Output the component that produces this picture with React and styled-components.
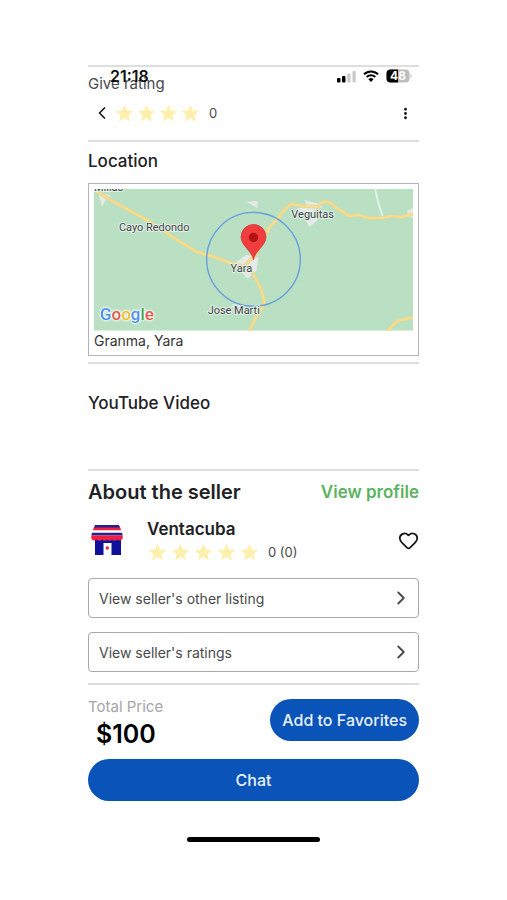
import React, { useState } from "react";
import styled, { createGlobalStyle } from "styled-components";
import { ChevronLeft, ChevronRight, Heart } from "lucide-react";
import { MdStar, MdMoreVert } from "react-icons/md";

const GlobalStyle = createGlobalStyle`
  * {
    box-sizing: border-box;
  }
  body {
    margin: 0;
    background-color: #ffffff;
    color: #202124;
    font-family: Inter, "Liberation Sans", sans-serif;
  }
  h1, h2, h3, p {
    margin: 0;
  }
  button {
    font-family: inherit;
    color: inherit;
    cursor: pointer;
  }
`;

const Screen = styled.main`
  display: flex;
  flex-direction: column;
  padding: 65px 88px 56px;
`;

const StatusBar = styled.header`
  position: absolute;
  top: 66px;
  left: 110px;
  right: 95px;
  display: flex;
  align-items: center;
  justify-content: space-between;
  height: 20px;
`;

const Time = styled.time`
  font-size: 16px;
  line-height: 20px;
  font-weight: 600;
  color: #111111;
`;

const StatusIcons = styled.div`
  display: flex;
  align-items: center;
  gap: 7px;
  svg {
    display: block;
  }
`;

const Section = styled.section`
  display: flex;
  flex-direction: column;
  min-height: ${(props) => props.$height};
  padding-top: ${(props) => props.$top};
  border-top: 2px solid #dededf;
`;

const Label = styled.p`
  font-size: 15px;
  line-height: 18px;
  color: #48494b;
`;

const RateRow = styled.div`
  display: flex;
  align-items: center;
  height: 22px;
  margin-top: 9px;
  padding: 0 3px;
`;

const IconButton = styled.button`
  display: flex;
  align-items: center;
  justify-content: center;
  width: 22px;
  height: 22px;
  padding: 0;
  border: 0;
  background: none;
  color: ${(props) => props.$color || "#151515"};
  margin-left: ${(props) => (props.$end ? "auto" : 0)};
`;

const Stars = styled.div`
  display: flex;
  gap: ${(props) => props.$gap || 0};
  color: #fdf0ac;
`;

const StarSlot = styled.span`
  display: flex;
  align-items: center;
  justify-content: center;
  width: 22px;
  height: 22px;
`;

const Score = styled.span`
  margin-left: 8px;
  font-size: 13px;
  line-height: 20px;
  color: #48494b;
`;

const Heading = styled.h2`
  font-size: 17px;
  line-height: 24px;
  font-weight: 500;
`;

const MapCard = styled.div`
  margin-top: 10px;
  padding: 5px 5px 4px;
  border: 1px solid #b4b4b8;
  svg {
    display: block;
    width: 100%;
    height: auto;
  }
`;

const GoogleText = styled.text`
  font-family: Roboto, sans-serif;
  font-size: 17px;
  font-weight: 500;
  filter: drop-shadow(0 0 1px #ffffff) drop-shadow(0 0 1px #ffffff);
`;

const Place = styled.p`
  font-size: 14px;
  line-height: 20px;
  color: #333436;
`;

const TitleRow = styled.div`
  display: flex;
  align-items: center;
  justify-content: space-between;
`;

const Title = styled.h2`
  font-size: 20px;
  line-height: 24px;
  font-weight: 600;
`;

const ProfileLink = styled.a`
  font-size: 17px;
  line-height: 24px;
  font-weight: 600;
  color: #5bb35f;
  text-decoration: none;
`;

const Seller = styled.div`
  display: flex;
  align-items: center;
  gap: 23px;
  margin-top: 13px;
  padding-left: 3px;
`;

const SellerInfo = styled.div`
  flex: 1;
`;

const SellerName = styled.h3`
  padding-left: 1px;
  font-size: 17px;
  line-height: 24px;
  font-weight: 600;
`;

const SellerRating = styled.div`
  display: flex;
  align-items: center;
`;

const Links = styled.nav`
  display: flex;
  flex-direction: column;
  gap: 14px;
  margin: 15px 0 11px;
`;

const RowLink = styled.a`
  display: flex;
  align-items: center;
  justify-content: space-between;
  height: 40px;
  padding: 0 6px 0 10px;
  border: 1px solid #a9a9ab;
  border-radius: 4px;
  font-size: 14px;
  color: #48494b;
  text-decoration: none;
`;

const Checkout = styled.div`
  display: flex;
  align-items: flex-start;
  justify-content: space-between;
  margin-bottom: 10px;
`;

const PriceLabel = styled.p`
  font-size: 15px;
  line-height: 16px;
  color: #a5a5a7;
`;

const Price = styled.p`
  padding: 4px 0 0 8px;
  font-size: 25px;
  line-height: 30px;
  font-weight: 600;
  color: #000000;
`;

const PillButton = styled.button`
  height: 42px;
  padding: 0 12px;
  border: 0;
  border-radius: 21px;
  background-color: #0a53b8;
  color: #e9f1fc;
  font-size: 16px;
  font-weight: 500;
  white-space: nowrap;
`;

const HomeBar = styled.div`
  width: 40%;
  height: 5px;
  margin: 36px auto 0;
  border-radius: 3px;
  background-color: #000000;
`;

const roads = [
  "M2 2 L20 13 L53 31 L80 49 L103 63 L120 68 L136 74 L152 78",
  "M150 78 L162 66 L173 44 L176 38 L183 31 L191 21 L198 15 L209 17 L224 18 L229 13 L236 13 L243 19 L256 27 L266 26 L274 29 L291 29 L299 27 L309 28 L320 25",
  "M152 78 L159 84 L168 101 L171 113 L168 121 L163 128 L156 142",
  "M295 142 L299 137 L306 132 L320 129",
];

const towns = [
  { name: "Millas", x: 0, y: 2 },
  { name: "Cayo Redondo", x: 25, y: 42 },
  { name: "Veguitas", x: 198, y: 29 },
  { name: "Yara", x: 137, y: 83 },
  { name: "Jose Marti", x: 114, y: 125 },
];

const googleLetters = [
  ["G", "#4d8ff0"],
  ["o", "#e8564a"],
  ["o", "#f5bd2c"],
  ["g", "#4d8ff0"],
  ["l", "#41a85f"],
  ["e", "#e8564a"],
];

function LocationMap() {
  return (
    <svg viewBox="0 0 320 142" role="img" aria-label="Map of Yara">
      <rect width="320" height="142" fill="#bae0c4" />
      <g fill="#e5e9e8">
        <path d="M3 2 L17 7 L12 10 L8 18 L6 10 Z" />
        <path d="M153 13 L164 12 L164 19 Z" />
        <path d="M211 11 L226 15 L229 18 L221 21 L224 32 L216 38 L211 29 L203 20 L214 17 Z" />
        <path d="M143 73 L153 66 L165 69 L163 82 L154 90 L147 82 L139 78 Z" />
        <path d="M314 22 L320 19 V29 L316 28 Z" />
        <path d="M136 119 L143 114 L149 119 Z" />
      </g>
      <path d="M282 0 L285 13 L290 29" fill="none" stroke="#e2f1e5" strokeWidth="2" />
      <g fill="none" strokeLinejoin="round">
        {roads.map((d) => (
          <path key={d} d={d} stroke="#dcd59c" strokeWidth="3.5" />
        ))}
        {roads.map((d) => (
          <path key={`${d}-fill`} d={d} stroke="#f6dc8c" strokeWidth="2.5" />
        ))}
      </g>
      <circle cx="160" cy="70.5" r="47" fill="none" stroke="#6a9fdc" strokeWidth="1.4" />
      <g
        fill="#3f4447"
        stroke="#e4f2e7"
        strokeWidth="2"
        strokeLinejoin="round"
        paintOrder="stroke"
        fontFamily="Roboto, sans-serif"
        fontSize="11"
      >
        {towns.map((town) => (
          <text key={town.name} x={town.x} y={town.y}>
            {town.name}
          </text>
        ))}
      </g>
      <path
        d="M160 71 C158.5 62 147.5 57 147.5 48 A12.5 12.5 0 0 1 172.5 48 C172.5 57 161.5 62 160 71 Z"
        fill="#f03d3d"
        stroke="#c93232"
        strokeWidth="0.7"
      />
      <circle cx="160" cy="48.5" r="4.7" fill="#b31412" />
      <GoogleText x="6" y="131">
        {googleLetters.map(([letter, color], i) => (
          <tspan key={i} fill={color}>
            {letter}
          </tspan>
        ))}
      </GoogleText>
    </svg>
  );
}

function StoreLogo() {
  return (
    <svg width="32" height="32" viewBox="0 0 32 32" role="img" aria-label="Ventacuba">
      <path d="M4 1 H28 L29.2 4 H2.8 Z" fill="#23208f" />
      <path d="M2.8 3.5 H29.2 L30.2 6.5 H1.8 Z" fill="#ee2142" />
      <path d="M1.8 6.5 H30.2 L30.8 8.8 H1.2 Z" fill="#ffffff" />
      <path d="M1 8.8 H31 L31.7 11.5 H0.3 Z" fill="#23208f" />
      <path d="M4 14 H30 V31 H20.5 V19 H12.5 V31 H4 Z" fill="#10109b" />
      <path
        d="M0.3 11.5 H31.7 V13 A3 3 0 0 1 26.5 15.5 A3.5 3.5 0 0 1 21 15.5 A3.5 3.5 0 0 1 16 15.5 A3.5 3.5 0 0 1 11 15.5 A3.5 3.5 0 0 1 5.5 15.5 A3 3 0 0 1 0.3 13 Z"
        fill="#ee2142"
      />
      <circle cx="16.3" cy="24" r="1.7" fill="#ee2142" />
    </svg>
  );
}

function PhoneStatus() {
  return (
    <StatusBar>
      <Time>21:18</Time>
      <StatusIcons>
        <svg width="19" height="13" viewBox="0 0 19 13" aria-hidden="true">
          <rect x="0" y="8" width="3.5" height="4.5" rx="1" fill="#000000" />
          <rect x="5" y="6" width="3.5" height="6.5" rx="1" fill="#000000" />
          <rect x="10.3" y="3.5" width="3.2" height="9" rx="1" fill="#c9c9c9" />
          <rect x="15.5" y="1" width="3.2" height="11.5" rx="1" fill="#c9c9c9" />
        </svg>
        <svg width="16" height="12" viewBox="0 0 16 12" aria-hidden="true">
          <g fill="none" stroke="#000000" strokeWidth="2">
            <path d="M1 4.3 A10 10 0 0 1 15 4.3" />
            <path d="M3.7 7 A6.2 6.2 0 0 1 12.3 7" />
          </g>
          <path d="M8 12 L5.4 9.3 A3.7 3.7 0 0 1 10.6 9.3 Z" fill="#000000" />
        </svg>
        <svg width="26" height="14" viewBox="0 0 26 14" role="img" aria-label="Battery">
          <rect x="0.5" y="0.5" width="23" height="13" rx="4" fill="#bdbdbd" />
          <path d="M4.5 0.5 H12 V13.5 H4.5 A4 4 0 0 1 0.5 9.5 V4.5 A4 4 0 0 1 4.5 0.5 Z" fill="#000000" />
          <path d="M24.3 5 A2.2 2.2 0 0 1 24.3 9 Z" fill="#bdbdbd" />
          <text x="12" y="11.3" textAnchor="middle" fontFamily="Inter, sans-serif" fontSize="12" fontWeight="700" fill="#ffffff">
            48
          </text>
        </svg>
      </StatusIcons>
    </StatusBar>
  );
}

function App() {
  const [rating, setRating] = useState(0);
  const [favorite, setFavorite] = useState(false);

  return (
    <>
      <GlobalStyle />
      <Screen>
        <Section $height="75px" $top="8px">
          <Label>Give rating</Label>
          <RateRow>
            <IconButton aria-label="Back">
              <ChevronLeft size={20} />
            </IconButton>
            <Stars>
              {[1, 2, 3, 4].map((n) => (
                <IconButton
                  key={n}
                  $color={n <= rating ? "#fbc02d" : "#fdf0ac"}
                  aria-label={`Rate ${n}`}
                  onClick={() => setRating(n)}
                >
                  <MdStar size={21} />
                </IconButton>
              ))}
            </Stars>
            <Score>{rating}</Score>
            <IconButton $end aria-label="More options">
              <MdMoreVert size={17} />
            </IconButton>
          </RateRow>
        </Section>

        <Section $height="222px" $top="7px">
          <Heading>Location</Heading>
          <MapCard>
            <LocationMap />
            <Place>Granma, Yara</Place>
          </MapCard>
        </Section>

        <Section $height="107px" $top="27px">
          <Heading>YouTube Video</Heading>
        </Section>

        <Section $top="9px">
          <TitleRow>
            <Title>About the seller</Title>
            <ProfileLink href="#profile">View profile</ProfileLink>
          </TitleRow>
          <Seller>
            <StoreLogo />
            <SellerInfo>
              <SellerName>Ventacuba</SellerName>
              <SellerRating>
                <Stars $gap="1px">
                  {[1, 2, 3, 4, 5].map((n) => (
                    <StarSlot key={n}>
                      <MdStar size={21} />
                    </StarSlot>
                  ))}
                </Stars>
                <Score>0 (0)</Score>
              </SellerRating>
            </SellerInfo>
            <IconButton
              aria-label="Favorite seller"
              aria-pressed={favorite}
              onClick={() => setFavorite(!favorite)}
            >
              <Heart size={21} fill={favorite ? "currentColor" : "none"} />
            </IconButton>
          </Seller>
          <Links>
            <RowLink href="#listing">
              View seller's other listing
              <ChevronRight size={22} />
            </RowLink>
            <RowLink href="#ratings">
              View seller's ratings
              <ChevronRight size={22} />
            </RowLink>
          </Links>
        </Section>

        <Section $top="14px">
          <Checkout>
            <div>
              <PriceLabel>Total Price</PriceLabel>
              <Price>$100</Price>
            </div>
            <PillButton>Add to Favorites</PillButton>
          </Checkout>
          <PillButton>Chat</PillButton>
        </Section>
        <HomeBar />
      </Screen>
      <PhoneStatus />
    </>
  );
}

export default App;
